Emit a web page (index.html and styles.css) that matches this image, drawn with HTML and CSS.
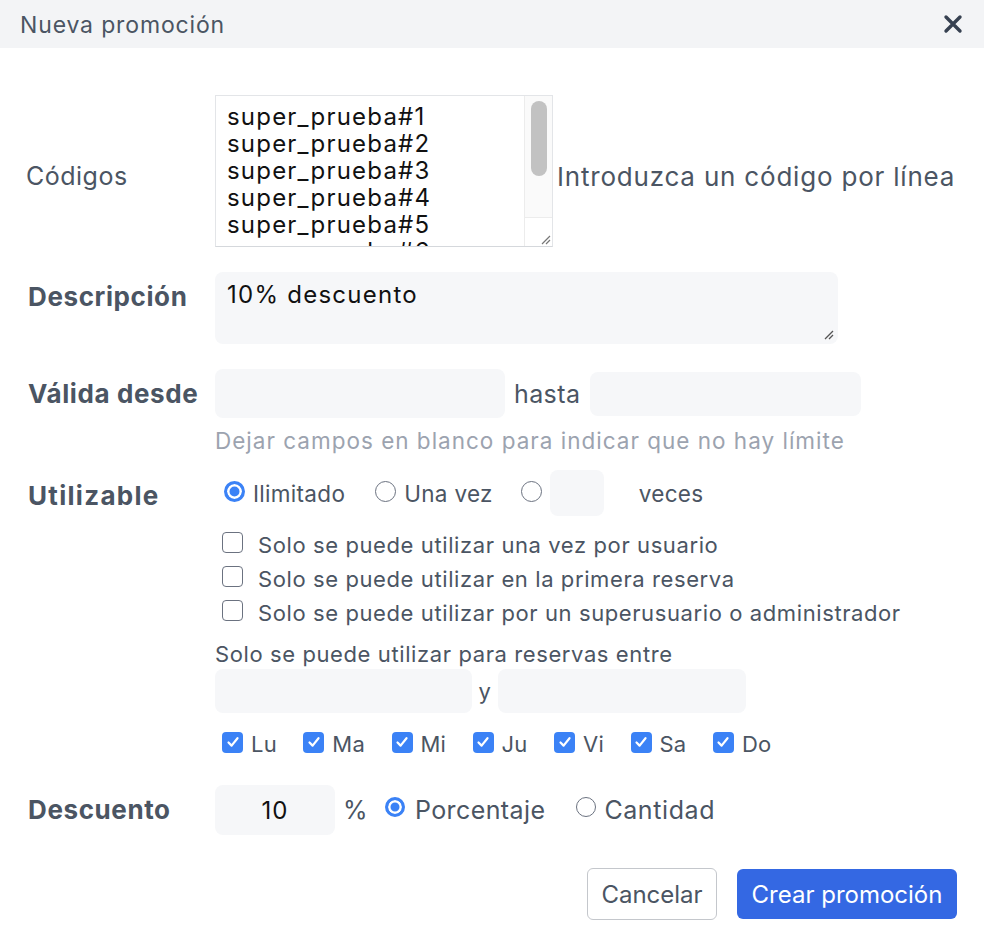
FILE: index.html
```html
<!DOCTYPE html>
<html lang="es">
<head>
<meta charset="utf-8">
<title>Nueva promoción</title>
<link rel="stylesheet" href="styles.css">
</head>
<body>
<div class="modal">
  <header class="head">
    <h1 class="title">Nueva promoción</h1>
    <button class="close" aria-label="Cerrar">
      <svg width="20" height="20" viewBox="0 0 20 20"><path d="M3 3 L17 17 M17 3 L3 17" stroke="#374151" stroke-width="3.4" stroke-linecap="round" fill="none"/></svg>
    </button>
  </header>

  <div class="body">
    <div class="row row-codes">
      <div class="lab lab-plain">Códigos</div>
      <div class="codes">
        <div class="codes-text">
          <div>super_prueba#1</div>
          <div>super_prueba#2</div>
          <div>super_prueba#3</div>
          <div>super_prueba#4</div>
          <div>super_prueba#5</div>
          <div>super_prueba#6</div>
        </div>
        <div class="scroll">
          <div class="thumb"></div>
          <div class="corner">
            <svg width="12" height="12" viewBox="0 0 12 12"><path d="M11 3 L3 11 M11 7 L7 11" stroke="#777" stroke-width="1.2" fill="none"/></svg>
          </div>
        </div>
      </div>
      <span class="hint">Introduzca un código por línea</span>
    </div>

    <div class="row row-desc">
      <div class="lab lab-top">Descripción</div>
      <div class="desc">
        <span class="desc-text">10% descuento</span>
        <svg class="grip" width="12" height="12" viewBox="0 0 12 12"><path d="M11 3 L3 11 M11 7 L7 11" stroke="#555" stroke-width="1.3" fill="none"/></svg>
      </div>
    </div>

    <div class="row row-dates">
      <div class="lab">Válida desde</div>
      <div class="field f-from"></div>
      <span class="txt t-hasta">hasta</span>
      <div class="field f-to"></div>
    </div>
    <div class="help">Dejar campos en blanco para indicar que no hay límite</div>

    <div class="row row-use">
      <div class="lab lab-use">Utilizable</div>
      <div class="use">
        <div class="radios">
          <span class="radio on r1"></span><span class="opt">Ilimitado</span>
          <span class="radio r2"></span><span class="opt">Una vez</span>
          <span class="radio r3"></span><div class="field f-times"></div><span class="opt o-veces">veces</span>
        </div>
        <div class="check-line first"><span class="cb"></span><span class="ctext">Solo se puede utilizar una vez por usuario</span></div>
        <div class="check-line"><span class="cb"></span><span class="ctext">Solo se puede utilizar en la primera reserva</span></div>
        <div class="check-line"><span class="cb"></span><span class="ctext">Solo se puede utilizar por un superusuario o administrador</span></div>
        <div class="between">Solo se puede utilizar para reservas entre</div>
        <div class="between-fields">
          <div class="field f-b1"></div>
          <span class="txt t-y">y</span>
          <div class="field f-b2"></div>
        </div>
        <div class="days">
          <span class="day"><span class="cb on"><svg width="14" height="14" viewBox="0 0 14 14"><path d="M2.5 7.5 L5.6 10.6 L11.5 3.2" stroke="#fff" stroke-width="2.2" fill="none" stroke-linecap="round" stroke-linejoin="round"/></svg></span><span class="dname">Lu</span></span>
          <span class="day"><span class="cb on"><svg width="14" height="14" viewBox="0 0 14 14"><path d="M2.5 7.5 L5.6 10.6 L11.5 3.2" stroke="#fff" stroke-width="2.2" fill="none" stroke-linecap="round" stroke-linejoin="round"/></svg></span><span class="dname">Ma</span></span>
          <span class="day"><span class="cb on"><svg width="14" height="14" viewBox="0 0 14 14"><path d="M2.5 7.5 L5.6 10.6 L11.5 3.2" stroke="#fff" stroke-width="2.2" fill="none" stroke-linecap="round" stroke-linejoin="round"/></svg></span><span class="dname">Mi</span></span>
          <span class="day"><span class="cb on"><svg width="14" height="14" viewBox="0 0 14 14"><path d="M2.5 7.5 L5.6 10.6 L11.5 3.2" stroke="#fff" stroke-width="2.2" fill="none" stroke-linecap="round" stroke-linejoin="round"/></svg></span><span class="dname">Ju</span></span>
          <span class="day"><span class="cb on"><svg width="14" height="14" viewBox="0 0 14 14"><path d="M2.5 7.5 L5.6 10.6 L11.5 3.2" stroke="#fff" stroke-width="2.2" fill="none" stroke-linecap="round" stroke-linejoin="round"/></svg></span><span class="dname">Vi</span></span>
          <span class="day"><span class="cb on"><svg width="14" height="14" viewBox="0 0 14 14"><path d="M2.5 7.5 L5.6 10.6 L11.5 3.2" stroke="#fff" stroke-width="2.2" fill="none" stroke-linecap="round" stroke-linejoin="round"/></svg></span><span class="dname">Sa</span></span>
          <span class="day"><span class="cb on"><svg width="14" height="14" viewBox="0 0 14 14"><path d="M2.5 7.5 L5.6 10.6 L11.5 3.2" stroke="#fff" stroke-width="2.2" fill="none" stroke-linecap="round" stroke-linejoin="round"/></svg></span><span class="dname">Do</span></span>
        </div>
      </div>
    </div>

    <div class="row row-disc">
      <div class="lab">Descuento</div>
      <div class="field f-disc">10</div>
      <span class="txt t-pct">%</span>
      <span class="radio on r-pct"></span><span class="opt o-big">Porcentaje</span>
      <span class="radio r-qty"></span><span class="opt o-big o-qty">Cantidad</span>
    </div>

    <div class="actions">
      <button class="btn btn-cancel">Cancelar</button>
      <button class="btn btn-primary">Crear promoción</button>
    </div>
  </div>
</div>
</body>
</html>
```

FILE: styles.css
```css
* { box-sizing: border-box; }
html, body { margin: 0; padding: 0; background: #fff; }
body { font-family: Inter, "Noto Sans", sans-serif; color: #4b5563; }

.modal { width: 984px; height: 952px; background: #fff; }

.head {
  height: 48px;
  background: #f3f4f6;
  display: flex;
  align-items: center;
  justify-content: space-between;
  padding: 0 21px 0 20px;
}
.title { margin: 0; font-size: 23px; font-weight: 400; color: #4b5563; letter-spacing: 0.85px; padding-top: 1px; }
.close { border: 0; background: transparent; padding: 0; width: 20px; height: 20px; display: flex; }

.body { padding: 0 27px 0 28px; }

.row { display: flex; align-items: center; }
.lab { width: 187px; flex: none; font-size: 26px; font-weight: 700; color: #4b5563; line-height: 30px; letter-spacing: 0.6px; white-space: nowrap; }
.lab-plain { font-weight: 400; font-size: 25px; letter-spacing: 0.5px; margin-top: 10px; margin-left: -2px; margin-right: 2px; }

.txt, .opt, .hint { font-size: 25px; color: #4b5563; letter-spacing: 0.4px; }

/* Códigos */
.row-codes { margin-top: 47px; height: 152px; }
.codes {
  width: 338px; height: 152px;
  border: 1px solid #e3e5e8; border-bottom-color: #d5d8dc;
  display: flex; background: #fff; overflow: hidden;
}
.codes-text {
  flex: 1; padding: 7px 0 0 11px;
  font-size: 24px; line-height: 27px; letter-spacing: 1.2px; color: #111;
  overflow: hidden; white-space: nowrap;
}
.scroll {
  width: 28px; flex: none; border-left: 1px solid #ececec;
  display: flex; flex-direction: column; align-items: center; background: #fafafa;
}
.thumb { width: 16px; height: 75px; margin-top: 5px; border-radius: 8px; background: #c2c2c2; }
.corner {
  margin-top: auto; width: 100%; height: 29px; border-top: 1px solid #ececec;
  display: flex; align-items: flex-end; justify-content: flex-end; padding: 0 1px 1px 0; background: #fff;
}
.hint { margin-left: 4px; margin-top: 10px; font-size: 26px; letter-spacing: 0.8px; white-space: nowrap; }

/* Descripción */
.row-desc { margin-top: 25px; align-items: flex-start; }
.lab-top { margin-top: 10px; }
.desc {
  width: 623px; height: 72px; border-radius: 8px; background: #f6f7f9;
  padding: 9px 12px; position: relative;
}
.desc-text { font-size: 24px; line-height: 27px; letter-spacing: 1.25px; color: #111; }
.grip { position: absolute; right: 4px; bottom: 4px; }

/* Fechas */
.field { background: #f6f7f9; border-radius: 8px; flex: none; }
.row-dates { margin-top: 25px; height: 49px; }
.f-from { width: 290px; height: 49px; }
.t-hasta { margin-left: 9px; width: 76px; }
.f-to { width: 271px; height: 44px; }
.help { margin-left: 187px; margin-top: 8px; font-size: 22.5px; letter-spacing: 1px; line-height: 30px; color: #9ca3af; white-space: nowrap; }

/* Utilizable */
.row-use { margin-top: 14px; align-items: flex-start; }
.lab-use { line-height: 46px; padding-top: 3px; letter-spacing: 1.3px; }
.use { display: flex; flex-direction: column; }
.radios { display: flex; align-items: center; height: 46px; }
.radio {
  width: 21px; height: 21px; border-radius: 50%; flex: none;
  border: 1.5px solid #6b7280; background: #fff; margin-top: -3px;
}
.radio.on { border: 3px solid #3b82f6; background: #3b82f6; box-shadow: inset 0 0 0 2.5px #fff; }
.r1 { margin-left: 9px; }
.radios .opt { font-size: 22.5px; letter-spacing: 0.3px; margin-left: 8px; }
.r2 { margin-left: 30px; }
.r3 { margin-left: 28px; }
.f-times { width: 54px; height: 46px; margin-left: 8px; }
.radios .o-veces { margin-left: 35px; }

.check-line { display: flex; align-items: center; height: 34px; }
.check-line.first { margin-top: 12px; }
.cb {
  width: 21px; height: 21px; border-radius: 4px; flex: none;
  border: 1.5px solid #6b7280; background: #fff; margin-left: 7px; margin-top: -5px;
  display: flex; align-items: center; justify-content: center;
}
.cb.on { border: 0; background: #3b82f6; }
.ctext { margin-left: 15px; font-size: 22px; letter-spacing: 0.6px; color: #4b5563; white-space: nowrap; }
.between { font-size: 22px; letter-spacing: 0.6px; line-height: 29px; color: #4b5563; margin-top: 10px; }
.between-fields { display: flex; align-items: center; height: 44px; }
.f-b1 { width: 257px; height: 44px; }
.t-y { font-size: 22px; width: 26px; text-align: center; }
.f-b2 { width: 248px; height: 44px; }

.days { display: flex; align-items: center; height: 30px; margin-top: 16px; }
.day { display: flex; align-items: center; margin-right: 26.5px; }
.day .cb { margin-left: 7px; margin-top: -4px; }
.day + .day .cb { margin-left: 0; }
.dname { margin-left: 8px; font-size: 22px; letter-spacing: 0.2px; color: #4b5563; }

/* Descuento */
.row-disc { margin-top: 26px; height: 50px; }
.f-disc { width: 120px; height: 50px; display: flex; align-items: center; justify-content: center; font-size: 24px; letter-spacing: 1px; color: #111; }
.t-pct { margin-left: 8px; }
.r-pct { margin-left: 17px; margin-top: -6px; width: 20px; height: 20px; }
.o-big { margin-left: 10px; font-size: 25px; letter-spacing: 0.4px; }
.r-qty { margin-left: 31px; margin-top: -6px; width: 20px; height: 20px; }
.o-qty { margin-left: 8px; letter-spacing: 0.6px; }

/* Botones */
.actions { display: flex; justify-content: flex-end; gap: 20px; margin-top: 33px; }
.btn { font-family: inherit; font-size: 24px; border-radius: 6px; cursor: pointer; }
.btn-cancel { width: 130px; height: 52px; background: #fff; border: 1px solid #c4c7cc; color: #4b5563; }
.btn-primary { width: 220px; height: 50px; margin-top: 1px; background: #3468e3; border: 0; color: #fff; }
```
